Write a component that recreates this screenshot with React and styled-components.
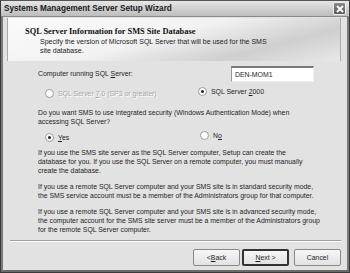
import React from "react";
import styled, { createGlobalStyle } from "styled-components";

const Global = createGlobalStyle`
  html, body { margin: 0; padding: 0; background: #fff; }
  body { font-family: "Liberation Sans", Arial, sans-serif; }
`;

export default function App() {
  return (
    <>
      <Global />
      <Window>
        <TitleBar>
          <span>Systems Management Server Setup Wizard</span>
          <CloseBox>
            <svg width="8" height="8" viewBox="0 0 8 8">
              <path d="M1 1 L7 7 M7 1 L1 7" stroke="#fff" strokeWidth="1.8" />
            </svg>
          </CloseBox>
        </TitleBar>
        <Body>
          <Header>
            <HeaderTitle>SQL Server Information for SMS Site Database</HeaderTitle>
            <HeaderText>
              Specify the version of Microsoft SQL Server that will be used for the SMS
              <br />
              site database.
            </HeaderText>
          </Header>
          <Content>
            <FieldRow>
              <Label>
                Computer running SQL <u>S</u>erver:
              </Label>
              <Input>DEN-MOM1</Input>
            </FieldRow>
            <RadioRow>
              <Radio disabled>
                <Dot />
                <span>
                  SQL Server <u>7</u>.0 (SP3 or greater)
                </span>
              </Radio>
              <Radio $left={197}>
                <Dot $on />
                <span>
                  SQL Server <u>2</u>000
                </span>
              </Radio>
            </RadioRow>
            <Para $top={9}>
              Do you want SMS to use integrated security (Windows Authentication Mode) when
              <br />
              accessing SQL Server?
            </Para>
            <RadioRow $top={5}>
              <Radio>
                <Dot $on />
                <span>
                  <u>Y</u>es
                </span>
              </Radio>
              <Radio $left={199}>
                <Dot />
                <span>
                  N<u>o</u>
                </span>
              </Radio>
            </RadioRow>
            <Para $top={5}>
              If you use the SMS site server as the SQL Server computer, Setup can create the
              <br />
              database for you. If you use the SQL Server on a remote computer, you must manually
              <br />
              create the database.
            </Para>
            <Para $top={7}>
              If you use a remote SQL Server computer and your SMS site is in standard security mode,
              <br />
              the SMS service account must be a member of the Administrators group for that computer.
            </Para>
            <Para $top={7}>
              If you use a remote SQL Server computer and your SMS site is in advanced security mode,
              <br />
              the computer account for the SMS site server must be a member of the Administrators group
              <br />
              for the remote SQL Server computer.
            </Para>
          </Content>
          <Separator />
          <ButtonBar>
            <Button>
              &lt; <u>B</u>ack
            </Button>
            <Button $default>
              <u>N</u>ext &gt;
            </Button>
            <Button $gap={5}>Cancel</Button>
          </ButtonBar>
        </Body>
      </Window>
    </>
  );
}

const Window = styled.div`
  width: 350px;
  height: 273px;
  box-sizing: border-box;
  border: 1px solid #3a3a3a;
  border-top-color: #555;
  background: #e2e2e2;
  display: flex;
  flex-direction: column;
  overflow: hidden;
`;

const TitleBar = styled.div`
  height: 15px;
  display: flex;
  align-items: center;
  justify-content: space-between;
  padding: 0 3px 0 3px;
  background: linear-gradient(#e6e6e6, #cdcdcd 60%, #bdbdbd);
  border-bottom: 1px solid #8a8a8a;
  font-weight: bold;
  font-size: 8.2px;
  color: #1a1a1a;
`;

const CloseBox = styled.div`
  width: 11px;
  height: 11px;
  border-radius: 2px;
  background: linear-gradient(#8a8a8a, #5a5a5a);
  border: 1px solid #eee;
  display: flex;
  align-items: center;
  justify-content: center;
`;

const Body = styled.div`
  flex: 1;
  display: flex;
  flex-direction: column;
  padding: 1px 6px 0 4px;
  border-left: 2px solid #7a7a7a;
  border-right: 2px solid #7a7a7a;
  border-bottom: 2px solid #6a6a6a;
`;

const Header = styled.div`
  height: 43px;
  box-sizing: border-box;
  padding: 9px 0 0 17px;
  background: linear-gradient(165deg, #fbfbfb 0%, #f2f2f2 45%, #cfcfcf 75%, #e8e8e8 100%);
  border-left: 1px solid #aaa;
  border-right: 1px solid #aaa;
`;

const HeaderTitle = styled.div`
  font-family: "Liberation Serif", "Times New Roman", serif;
  font-weight: bold;
  font-size: 8.4px;
  color: #111;
`;

const HeaderText = styled.div`
  margin: 1px 0 0 15px;
  font-size: 7px;
  line-height: 9px;
  color: #222;
`;

const Content = styled.div`
  flex: 1;
  padding: 4px 0 0 31px;
  font-size: 6.9px;
  color: #1e1e1e;
`;

const FieldRow = styled.div`
  display: flex;
  align-items: center;
  height: 17px;
`;

const Label = styled.div`
  width: 193px;
`;

const Input = styled.div`
  width: 78px;
  height: 13px;
  background: #fff;
  border-top: 2px solid #777;
  border-left: 1px solid #999;
  border-right: 1px solid #eee;
  border-bottom: 1px solid #eee;
  padding-left: 3px;
  display: flex;
  align-items: center;
  font-size: 6.9px;
`;

const RadioRow = styled.div`
  display: flex;
  height: 12px;
  margin-top: ${({ $top }) => ($top ?? 5)}px;
  padding-left: 7px;
  position: relative;
`;

const Radio = styled.div`
  display: flex;
  align-items: center;
  gap: 4px;
  color: ${({ disabled }) => (disabled ? "#a8a8a8" : "#1e1e1e")};
  text-shadow: ${({ disabled }) => (disabled ? "1px 1px 0 #fff" : "none")};
  ${({ $left }) => ($left ? `position: absolute; left: ${$left - 37}px; top: 0;` : "")}
`;

const Dot = styled.span`
  width: 7px;
  height: 7px;
  border-radius: 50%;
  background: #fff;
  border: 1px solid #9a9a9a;
  box-sizing: content-box;
  display: flex;
  align-items: center;
  justify-content: center;
  &::after {
    content: "";
    width: 3px;
    height: 3px;
    border-radius: 50%;
    background: ${({ $on }) => ($on ? "#222" : "transparent")};
  }
`;

const Para = styled.p`
  margin: ${({ $top }) => $top}px 0 0 0;
  line-height: 9px;
  font-size: 6.9px;
  white-space: nowrap;
`;

const Separator = styled.div`
  height: 0;
  margin: 0 0 0 3px;
  border-top: 1px solid #a0a0a0;
  border-bottom: 1px solid #fff;
`;

const ButtonBar = styled.div`
  display: flex;
  justify-content: flex-end;
  padding: 7px 0 0 0;
  height: 28px;
  box-sizing: border-box;
`;

const Button = styled.div`
  width: 47px;
  height: 17px;
  box-sizing: border-box;
  margin-left: ${({ $gap }) => $gap ?? 2}px;
  display: flex;
  align-items: center;
  justify-content: center;
  font-size: 6.9px;
  color: #1e1e1e;
  background: linear-gradient(#f7f7f7, #e2e2e2);
  border: ${({ $default }) => ($default ? "2px solid #333" : "1px solid #888")};
  border-radius: 2px;
`;
